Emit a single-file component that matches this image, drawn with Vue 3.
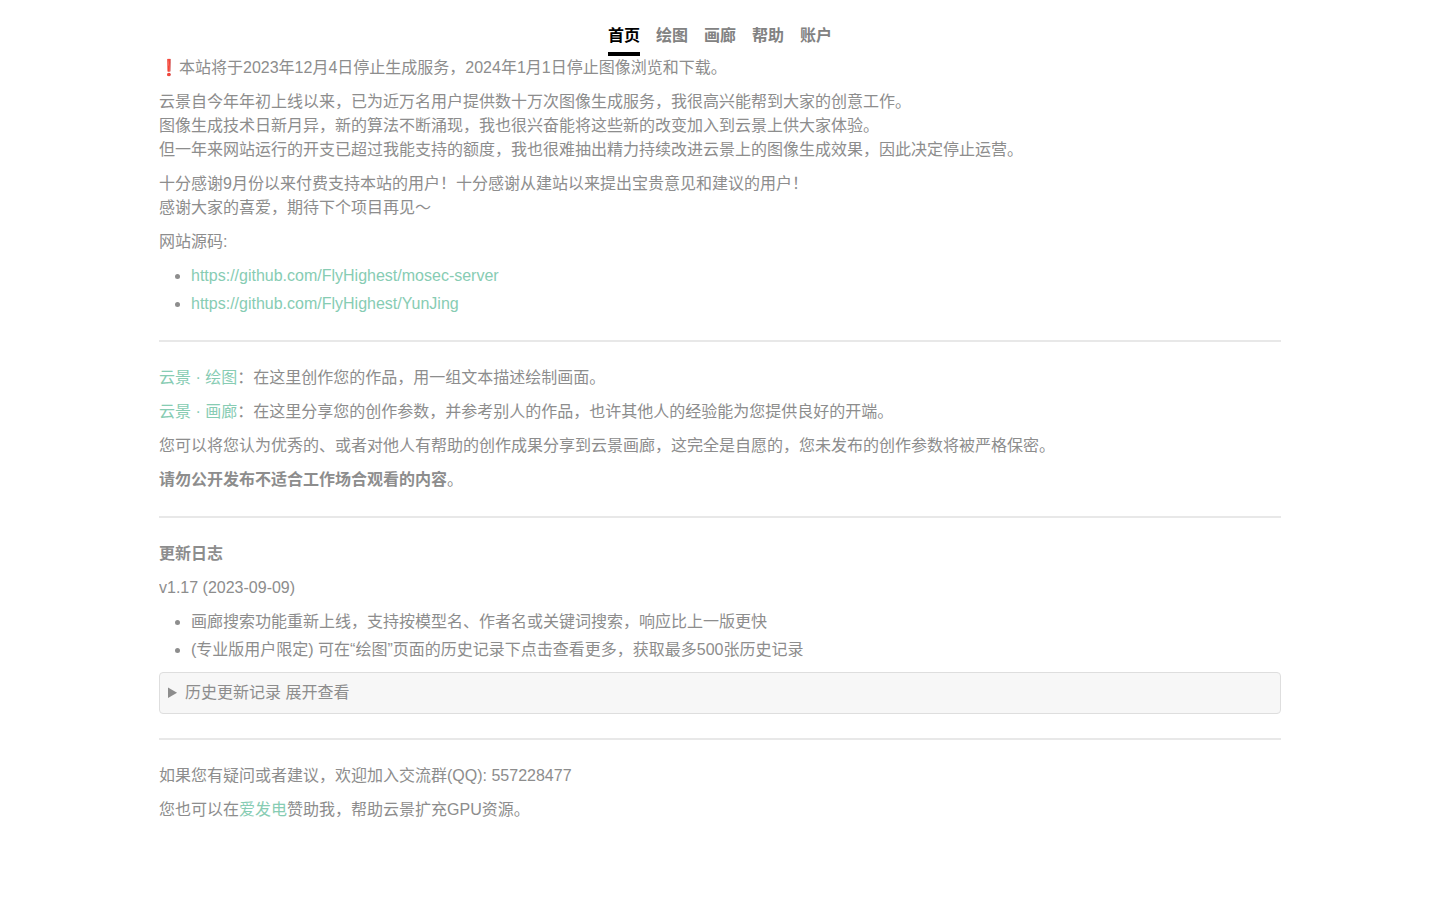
<script setup>
const tabs = ['首页', '绘图', '画廊', '帮助', '账户']
</script>

<template>
  <div class="page">
    <nav class="tabs">
      <div v-for="(t, i) in tabs" :key="t" class="tab" :class="{ active: i === 0 }">{{ t }}</div>
    </nav>
    <main class="content">
      <p>❗本站将于2023年12月4日停止生成服务，2024年1月1日停止图像浏览和下载。</p>
      <p>云景自今年年初上线以来，已为近万名用户提供数十万次图像生成服务，我很高兴能帮到大家的创意工作。<br>图像生成技术日新月异，新的算法不断涌现，我也很兴奋能将这些新的改变加入到云景上供大家体验。<br>但一年来网站运行的开支已超过我能支持的额度，我也很难抽出精力持续改进云景上的图像生成效果，因此决定停止运营。</p>
      <p>十分感谢9月份以来付费支持本站的用户！十分感谢从建站以来提出宝贵意见和建议的用户！<br>感谢大家的喜爱，期待下个项目再见～</p>
      <p>网站源码:</p>
      <ul>
        <li><a>https://github.com/FlyHighest/mosec-server</a></li>
        <li><a>https://github.com/FlyHighest/YunJing</a></li>
      </ul>
      <hr>
      <p><a>云景 · 绘图</a>：在这里创作您的作品，用一组文本描述绘制画面。</p>
      <p><a>云景 · 画廊</a>：在这里分享您的创作参数，并参考别人的作品，也许其他人的经验能为您提供良好的开端。</p>
      <p>您可以将您认为优秀的、或者对他人有帮助的创作成果分享到云景画廊，这完全是自愿的，您未发布的创作参数将被严格保密。</p>
      <p><strong>请勿公开发布不适合工作场合观看的内容</strong>。</p>
      <hr>
      <p><strong>更新日志</strong></p>
      <p>v1.17 (2023-09-09)</p>
      <ul>
        <li>画廊搜索功能重新上线，支持按模型名、作者名或关键词搜索，响应比上一版更快</li>
        <li>(专业版用户限定) 可在“绘图”页面的历史记录下点击查看更多，获取最多500张历史记录</li>
      </ul>
      <details>
        <summary>历史更新记录 展开查看</summary>
      </details>
      <hr>
      <p>如果您有疑问或者建议，欢迎加入交流群(QQ): 557228477</p>
      <p>您也可以在<a>爱发电</a>赞助我，帮助云景扩充GPU资源。</p>
    </main>
  </div>
</template>

<style>
html, body { margin: 0; background: #fff; }
</style>

<style scoped>
.page {
  font-family: "Liberation Sans", "Noto Sans CJK SC", sans-serif;
  font-size: 16px;
  line-height: 24px;
  color: #8c8c8c;
}
.tabs {
  display: flex;
  justify-content: center;
  gap: 16px;
  height: 56px;
}
.tab {
  font-weight: 700;
  height: 56px;
  box-sizing: border-box;
  padding-top: 24px;
  color: #828282;
}
.tab.active {
  color: #000;
  border-bottom: 4px solid #000;
}
.content { width: 1122px; margin: 0 auto; opacity: .99; }
p { margin: 0 0 10px; }
a { color: #86ccb3; }
ul { margin: 0 0 10px; padding-left: 32px; }
li { margin-bottom: 4px; }
hr {
  border: 0;
  height: 2px;
  background: #e8e8e8;
  margin: 24px 0;
}
details {
  background: #f7f7f7;
  border: 1px solid #dedede;
  border-radius: 4px;
  padding: 8px;
  margin-top: 10px;
}
summary { cursor: pointer; }
</style>
